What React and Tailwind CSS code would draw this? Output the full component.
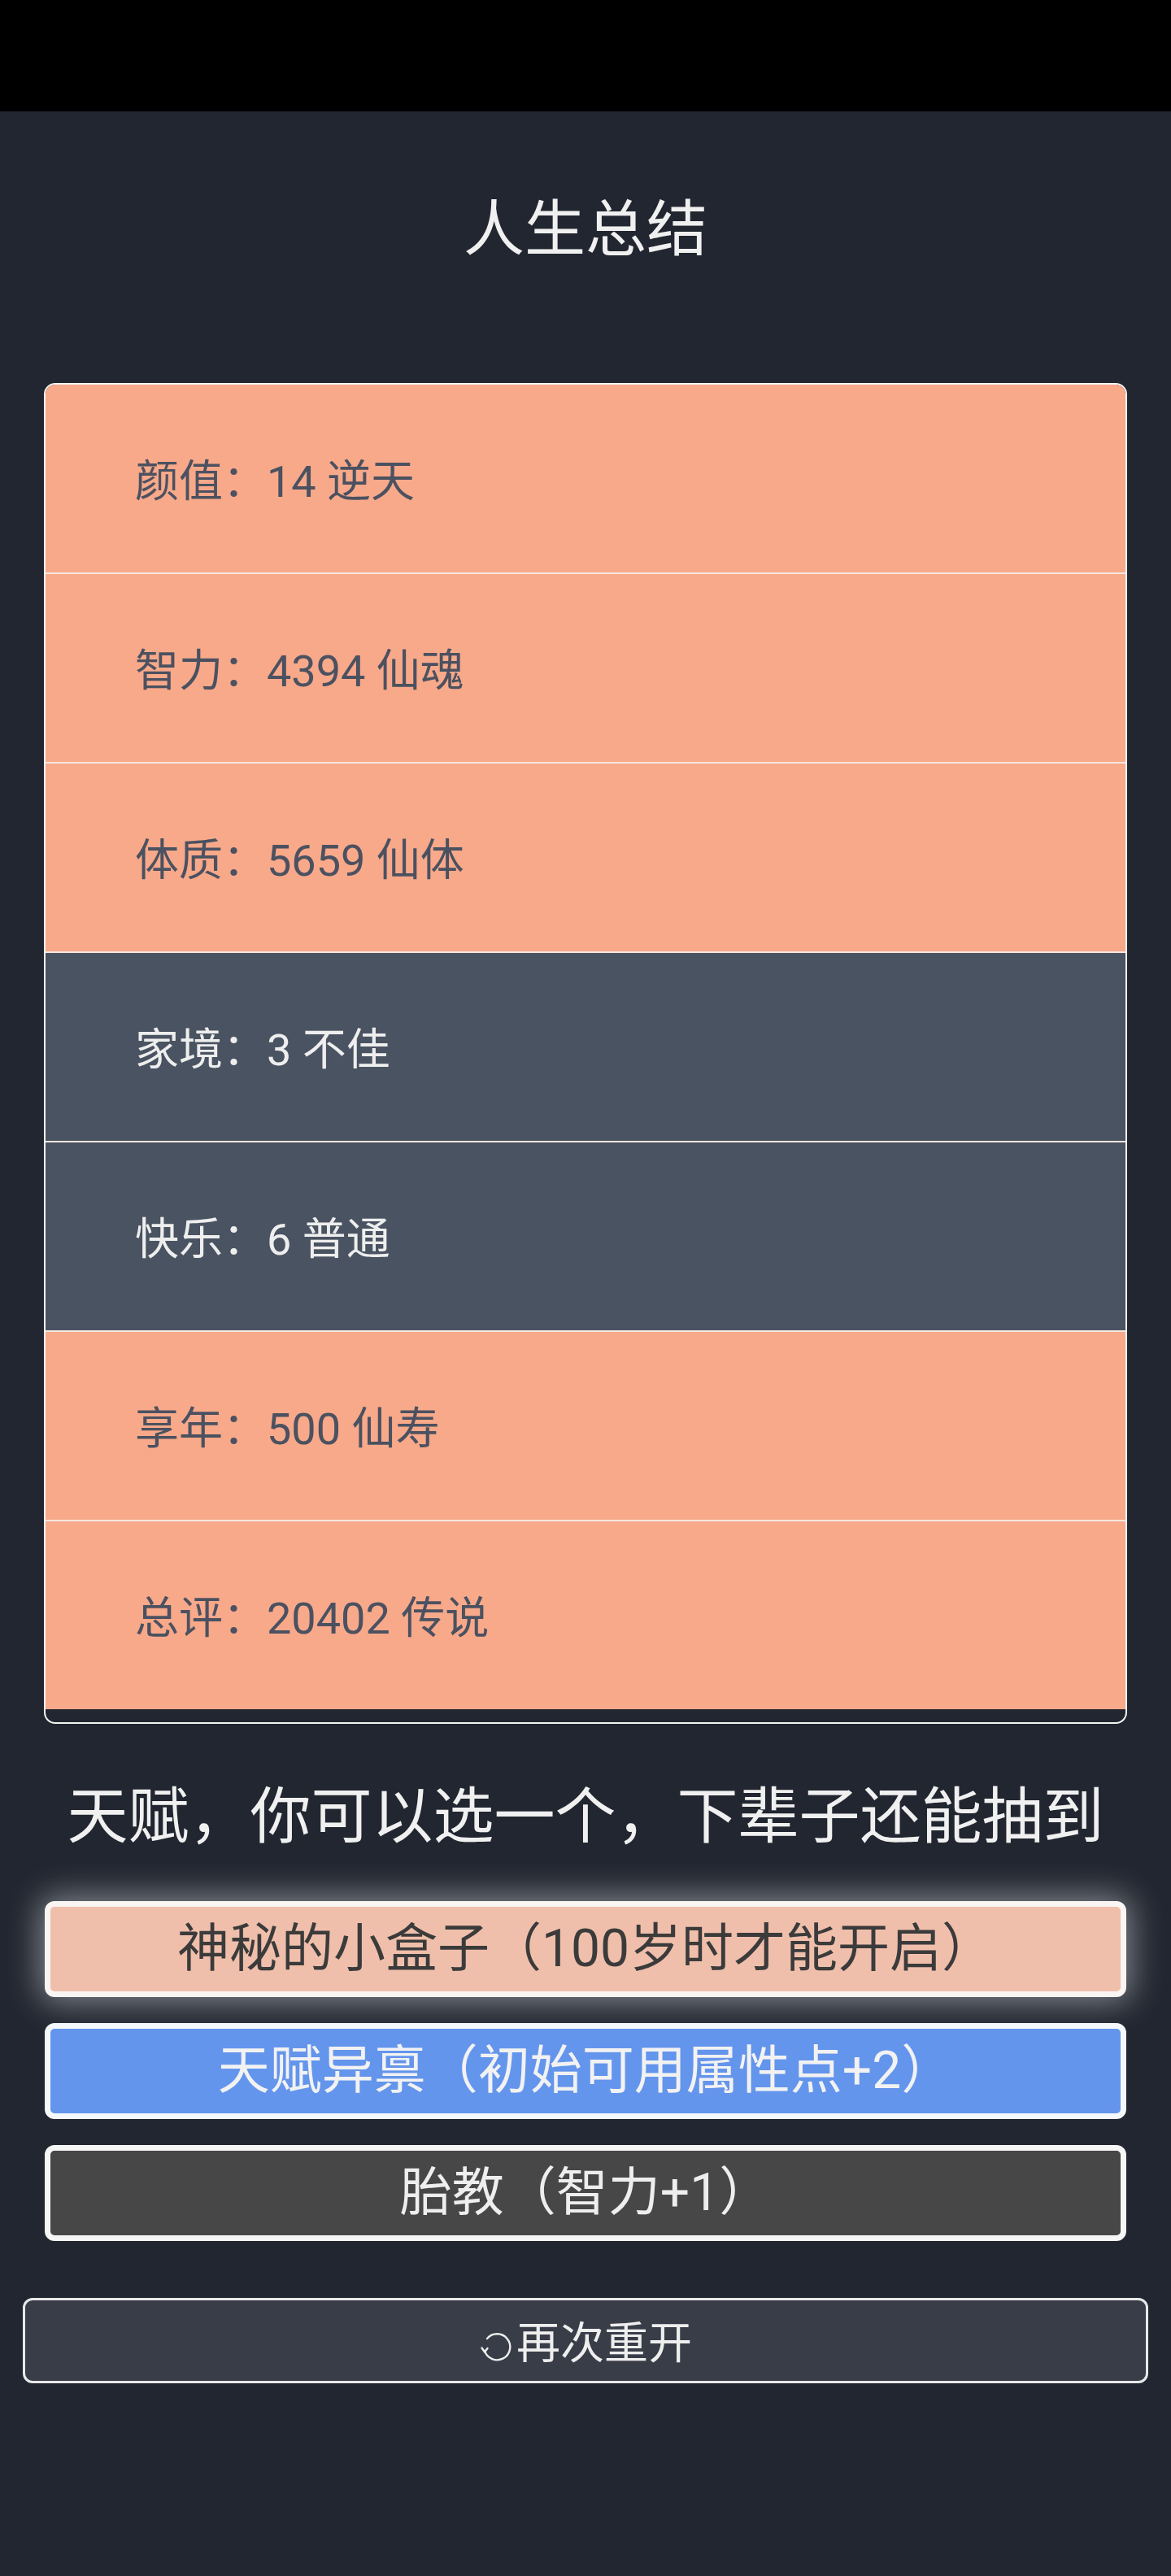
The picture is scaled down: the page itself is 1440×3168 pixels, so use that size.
import React from "react";

const rows = [
  { label: "颜值", value: "14 逆天", hi: true },
  { label: "智力", value: "4394 仙魂", hi: true },
  { label: "体质", value: "5659 仙体", hi: true },
  { label: "家境", value: "3 不佳", hi: false },
  { label: "快乐", value: "6 普通", hi: false },
  { label: "享年", value: "500 仙寿", hi: true },
  { label: "总评", value: "20402 传说", hi: true },
];

const font = { fontFamily: 'Roboto, "Noto Sans CJK SC", "Noto Sans", sans-serif' };

function RestartIcon() {
  return (
    <svg width="44" height="44" viewBox="0 0 44 44" fill="none" className="shrink-0 mr-[2px] mt-[6px]">
      <path
        d="M7 27 A16 16 0 1 0 10 12"
        stroke="#eeeeee"
        strokeWidth="2.4"
        strokeLinecap="round"
        fill="none"
      />
      <path d="M3.5 23.5 L7 28.5 L10.5 24" stroke="#eeeeee" strokeWidth="2.4" strokeLinecap="round" strokeLinejoin="round" fill="none" />
    </svg>
  );
}

export default function App() {
  return (
    <div className="w-[1440px] min-h-[3168px] bg-[#212630] flex flex-col" style={font}>
      <div className="h-[137px] bg-black shrink-0" />
      <div className="flex flex-col">
        <h1 className="mt-[100px] text-center text-[75px] leading-[90px] text-[#f0f0f0] font-normal">
          人生总结
        </h1>
        <div className="mt-[144px] mx-[54px] border-2 border-[#f4f4f4] rounded-[14px] overflow-hidden pb-[15px]">
          {rows.map((r, i) => (
            <div
              key={r.label}
              className={
                (r.hi ? "bg-[#f7a98a] text-[#4b5160] " : "bg-[#4a5361] text-[#eeeeee] ") +
                (i === 0 ? "h-[231px] " : "h-[233px] border-t-2 border-[#f5e6df] ") +
                "flex items-center pl-[110px] pt-[8px] text-[54px] leading-none"
              }
            >
              <span>
                {r.label}：{r.value}
              </span>
            </div>
          ))}
          <div className="h-px bg-[#2a2a30]" />
        </div>

        <h2 className="mt-[69px] text-center text-[75px] leading-[90px] text-[#f0f0f0] font-normal">
          天赋，你可以选一个，下辈子还能抽到
        </h2>

        <div className="mt-[59px] mx-[55px] flex flex-col gap-[32px]">
          <div className="h-[118px] rounded-[12px] border-[7px] border-[#f8f5f3] bg-[#f0bfab] text-[#3b3b3b] flex items-center justify-center text-[64px] leading-none shadow-[0_0_40px_6px_rgba(255,255,255,0.45)]">
            神秘的小盒子（100岁时才能开启）
          </div>
          <div className="h-[118px] rounded-[12px] border-[7px] border-[#f5f8fa] bg-[#6495ec] text-[#f2f2f2] flex items-center justify-center text-[64px] leading-none">
            天赋异禀（初始可用属性点+2）
          </div>
          <div className="h-[118px] rounded-[12px] border-[7px] border-[#f6f6f6] bg-[#474747] text-[#eeeeee] flex items-center justify-center text-[64px] leading-none">
            胎教（智力+1）
          </div>
        </div>

        <div className="mt-[70px] mx-[28px] h-[105px] rounded-[12px] border-[3px] border-[#e8e8ea] bg-[#393d48] text-[#eeeeee] flex items-center justify-center pt-[8px] text-[54px] leading-none">
          <RestartIcon />
          <span>再次重开</span>
        </div>
      </div>
    </div>
  );
}
